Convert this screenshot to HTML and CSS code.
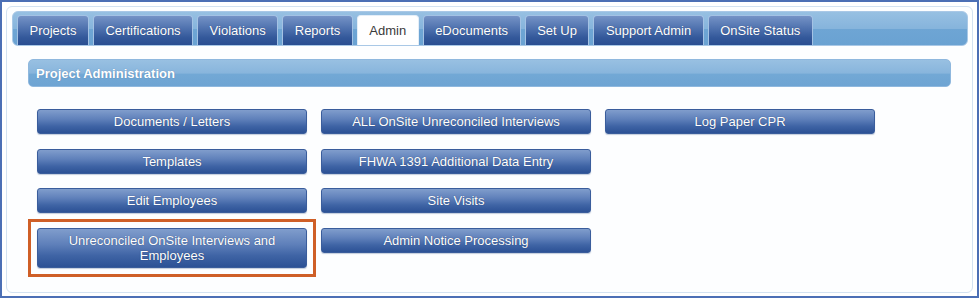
FILE: index.html
```html
<!DOCTYPE html>
<html lang="en">
<head>
  <meta charset="UTF-8" />
  <title>Project Administration</title>
  <link rel="stylesheet" href="styles.css">
</head>
<body>
  <div class="frame">
    <div class="panel">
      <ul class="tabs">
        <li class="tab">Projects</li>
        <li class="tab">Certifications</li>
        <li class="tab">Violations</li>
        <li class="tab">Reports</li>
        <li class="tab active">Admin</li>
        <li class="tab">eDocuments</li>
        <li class="tab">Set Up</li>
        <li class="tab">Support Admin</li>
        <li class="tab">OnSite Status</li>
      </ul>

      <div class="content">
        <div class="section-head">Project Administration</div>

        <div class="actions">
          <button class="btn">Documents / Letters</button>
          <button class="btn">ALL OnSite Unreconciled Interviews</button>
          <button class="btn">Log Paper CPR</button>

          <button class="btn">Templates</button>
          <button class="btn">FHWA 1391 Additional Data Entry</button>
          <span></span>

          <button class="btn">Edit Employees</button>
          <button class="btn">Site Visits</button>
          <span></span>

          <div class="highlight">
            <button class="btn tall">Unreconciled OnSite Interviews and Employees</button>
          </div>
          <button class="btn">Admin Notice Processing</button>
        </div>
      </div>
    </div>
  </div>
</body>
</html>
```

FILE: styles.css
```css
* {
  box-sizing: border-box;
}

body {
  margin: 0;
  background: #ffffff;
  font-family: "Liberation Sans", Arial, sans-serif;
}

.frame {
  width: 979px;
  height: 298px;
  border: 2px solid #4c6fb5;
  padding: 4px 4px 3px 4px;
  background: #ffffff;
}

.panel {
  height: 100%;
  border: 1px solid #d3e2f1;
  border-radius: 6px;
  padding: 4px 4px 0 5px;
  background: #fdfeff;
}

.tabs {
  list-style: none;
  margin: 0;
  padding: 5px 3px 0 4px;
  height: 35px;
  display: flex;
  gap: 4px;
  align-items: flex-end;
  border-radius: 6px;
  border: 1px solid #a9c8e6;
  background: linear-gradient(#97c0e2 0%, #86b4dc 50%, #6ea5d4 52%, #6aa2d2 100%);
}

.tab {
  height: 30px;
  padding: 0 11.5px;
  display: flex;
  align-items: center;
  font-size: 13px;
  color: #ffffff;
  border: 1px solid #a4c2e4;
  border-bottom: none;
  border-radius: 4px 4px 0 0;
  background: linear-gradient(#7593c6 0%, #4d70ad 45%, #33589a 75%, #2a4e91 100%);
  text-shadow: 0 0 1px rgba(20, 40, 80, 0.6);
}

.tab.active {
  color: #3a3a3a;
  background: #ffffff;
  border-color: #e4eef8;
  text-shadow: none;
}

.content {
  padding: 13px 17px 0 16px;
}

.section-head {
  height: 28px;
  padding-left: 7px;
  display: flex;
  align-items: center;
  font-size: 13px;
  font-weight: bold;
  color: #ffffff;
  border-radius: 5px;
  border: 1px solid #8fb8de;
  background: linear-gradient(#98c0e2 0%, #88b5dc 50%, #72a8d5 55%, #6ea4d3 100%);
  text-shadow: 0 0 1px rgba(40, 80, 130, 0.5);
}

.actions {
  display: grid;
  grid-template-columns: 270px 270px 270px;
  column-gap: 14px;
  row-gap: 14.5px;
  align-items: start;
  padding: 22px 0 0 9px;
}

.btn {
  width: 100%;
  height: 25px;
  padding: 0 20px;
  font-family: "Liberation Sans", Arial, sans-serif;
  font-size: 13px;
  line-height: 15px;
  color: #ffffff;
  border: 1px solid #3a5d9c;
  border-radius: 3px;
  background: linear-gradient(#809dcc 0%, #5f80ba 40%, #3f64a5 70%, #2c5195 100%);
  text-shadow: 0 0 1px rgba(20, 40, 80, 0.7);
  box-shadow: 0 1px 1px rgba(60, 90, 140, 0.3);
}

.btn.tall {
  display: block;
  height: 40px;
}

.highlight {
  outline: 3px solid #cf5f27;
  outline-offset: 6px;
}
```
